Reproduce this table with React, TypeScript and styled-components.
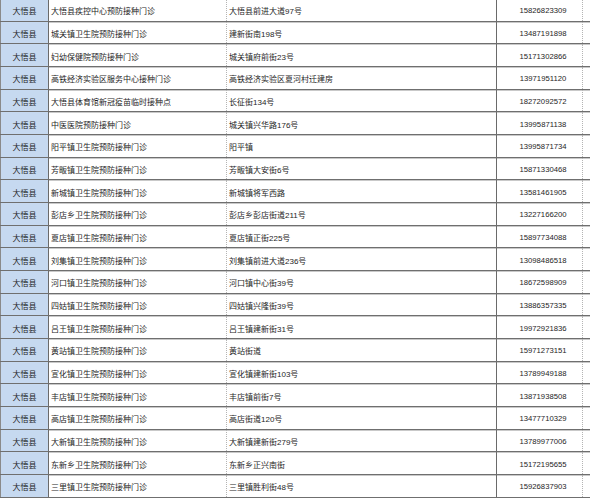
import React from "react";
import styled, { createGlobalStyle } from "styled-components";

const Global = createGlobalStyle`
  html, body { margin: 0; padding: 0; background: #ffffff; }
  body { overflow: hidden; }
`;

const rows: [string, string, string][] = [
  ["大悟县疾控中心预防接种门诊", "大悟县前进大道97号", "15826823309"],
  ["城关镇卫生院预防接种门诊", "建新街南198号", "13487191898"],
  ["妇幼保健院预防接种门诊", "城关镇府前街23号", "15171302866"],
  ["高铁经济实验区服务中心接种门诊", "高铁经济实验区夏河村迁建房", "13971951120"],
  ["大悟县体育馆新冠疫苗临时接种点", "长征街134号", "18272092572"],
  ["中医医院预防接种门诊", "城关镇兴华路176号", "13995871138"],
  ["阳平镇卫生院预防接种门诊", "阳平镇", "13995871734"],
  ["芳畈镇卫生院预防接种门诊", "芳畈镇大安街6号", "15871330468"],
  ["新城镇卫生院预防接种门诊", "新城镇将军西路", "13581461905"],
  ["彭店乡卫生院预防接种门诊", "彭店乡彭店街道211号", "13227166200"],
  ["夏店镇卫生院预防接种门诊", "夏店镇正街225号", "15897734088"],
  ["刘集镇卫生院预防接种门诊", "刘集镇前进大道236号", "13098486518"],
  ["河口镇卫生院预防接种门诊", "河口镇中心街39号", "18672598909"],
  ["四姑镇卫生院预防接种门诊", "四姑镇兴隆街39号", "13886357335"],
  ["吕王镇卫生院预防接种门诊", "吕王镇建新街31号", "19972921836"],
  ["黄站镇卫生院预防接种门诊", "黄站街道", "15971273151"],
  ["宣化镇卫生院预防接种门诊", "宣化镇建新街103号", "13789949188"],
  ["丰店镇卫生院预防接种门诊", "丰店镇前街7号", "13871938508"],
  ["高店镇卫生院预防接种门诊", "高店街道120号", "13477710329"],
  ["大新镇卫生院预防接种门诊", "大新镇建新街279号", "13789977006"],
  ["东新乡卫生院预防接种门诊", "东新乡正兴南街", "15172195655"],
  ["三里镇卫生院预防接种门诊", "三里镇胜利街48号", "15926837903"],
];

const Sheet = styled.div`
  width: 590px;
  margin-top: -1px;
  font-family: "Liberation Sans", "Noto Sans CJK SC", sans-serif;
  color: #1e1e1e;
`;

const Row = styled.div`
  display: grid;
  grid-template-columns: 49px 178px 270px 86px 7px;
  height: 22.68px;
  box-sizing: border-box;
  border-bottom: 1px solid #6f6f6f;
  box-shadow: inset 0 1px 0 #c9c9c9;
`;

type Align = "left" | "center";
type Edge = "solid" | "dotted" | "none";

const Cell = styled.div<{ $align: Align; $bg?: string; $edge: Edge; $pad?: number; $size?: number }>`
  display: flex;
  align-items: center;
  justify-content: ${(p) => (p.$align === "center" ? "center" : "flex-start")};
  padding-top: 2px;
  padding-left: ${(p) => p.$pad ?? 0}px;
  box-sizing: border-box;
  background: ${(p) => p.$bg ?? "transparent"};
  border-right: ${(p) =>
    p.$edge === "solid" ? "1px solid #6a6a6a" : p.$edge === "dotted" ? "1px dotted #b4b4b4" : "none"};
  font-size: ${(p) => p.$size ?? 8}px;
  white-space: nowrap;
  overflow: hidden;
`;

const CountyCell = styled(Cell)`
  border-left: 1px solid #8a8a8a;
`;

export default function App() {
  return (
    <>
      <Global />
      <Sheet>
        {rows.map(([name, addr, phone], i) => (
          <Row key={i}>
            <CountyCell $align="center" $bg="#c6d9f0" $edge="solid">
              大悟县
            </CountyCell>
            <Cell $align="left" $edge="dotted" $pad={2}>
              {name}
            </Cell>
            <Cell $align="left" $edge="solid" $pad={2}>
              {addr}
            </Cell>
            <Cell $align="center" $edge="dotted" $pad={7} $size={7.7}>
              {phone}
            </Cell>
            <Cell $align="left" $edge="none" />
          </Row>
        ))}
      </Sheet>
    </>
  );
}
